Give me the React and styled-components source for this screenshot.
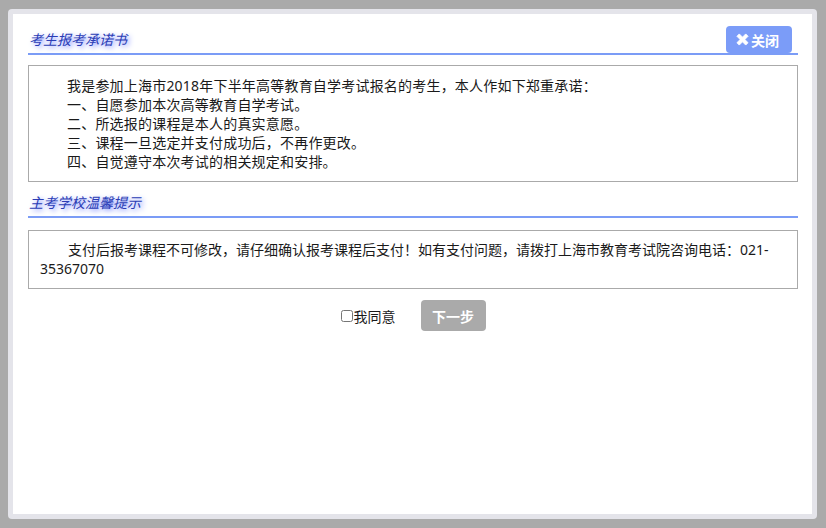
import styled, { createGlobalStyle } from "styled-components";

const Global = createGlobalStyle`
	html, body {
		margin: 0;
		padding: 0;
	}
	body {
		font-family: "Noto Sans", "Noto Sans CJK SC", sans-serif;
	}
`;

const promises = [
	"我是参加上海市2018年下半年高等教育自学考试报名的考生，本人作如下郑重承诺：",
	"一、自愿参加本次高等教育自学考试。",
	"二、所选报的课程是本人的真实意愿。",
	"三、课程一旦选定并支付成功后，不再作更改。",
	"四、自觉遵守本次考试的相关规定和安排。",
];

const App = () => {
	return (
		<Page>
			<Global />
			<Frame>
				<Dialog>
					<SectionHead>
						<SectionTitle>考生报考承诺书</SectionTitle>
						<CloseButton type="button">
							<svg width="15" height="15" viewBox="0 0 14 14">
								<path
									d="M1.8 4 L4 1.8 L7 4.8 L10 1.8 L12.2 4 L9.2 7 L12.2 10 L10 12.2 L7 9.2 L4 12.2 L1.8 10 L4.8 7 Z"
									fill="#fff"
									stroke="#fff"
									strokeWidth="0.8"
									strokeLinejoin="round"
								/>
							</svg>
							关闭
						</CloseButton>
					</SectionHead>
					<Box $top={10}>
						{promises.map((line) => (
							<Line key={line}>{line}</Line>
						))}
					</Box>
					<SectionHead $gap={7}>
						<SectionTitle>主考学校温馨提示</SectionTitle>
					</SectionHead>
					<Box $top={12} $pad="9px 11px 10px">
						<Notice>
							支付后报考课程不可修改，请仔细确认报考课程后支付！如有支付问题，请拨打上海市教育考试院咨询电话：021-
							<br />
							35367070
						</Notice>
					</Box>
					<Actions>
						<Agree>
							<input type="checkbox" />
							我同意
						</Agree>
						<NextButton type="button">下一步</NextButton>
					</Actions>
				</Dialog>
			</Frame>
		</Page>
	);
};

export default App;

const Page = styled.div`
	width: 826px;
	height: 528px;
	box-sizing: border-box;
	background: #aaaaaa;
	padding: 9px 9px 9px 8px;
	display: flex;
	overflow: hidden;
`;

const Frame = styled.div`
	flex: 1;
	background: #e4e4ea;
	border-radius: 4px;
	padding: 5px;
	display: flex;
`;

const Dialog = styled.div`
	flex: 1;
	background: #ffffff;
	padding: 12px 14px 0 15px;
	display: flex;
	flex-direction: column;
`;

const SectionHead = styled.div`
	display: flex;
	align-items: center;
	justify-content: space-between;
	height: 27px;
	margin-top: ${(p) => (p.$gap ? `${p.$gap}px` : "0")};
	border-bottom: 2px solid #7b9cf6;
`;

const SectionTitle = styled.h3`
	margin: 0 0 0 1px;
	font-size: 14px;
	font-weight: normal;
	font-style: italic;
	color: #2b3db5;
	text-shadow: 2px 2px 5px #7d8cff;
	line-height: 19px;
`;

const CloseButton = styled.button`
	display: flex;
	align-items: center;
	gap: 1px;
	width: 66px;
	height: 27px;
	margin-right: 6px;
	padding: 0 0 0 9px;
	border: none;
	border-radius: 4px;
	background: #7b9cf8;
	color: #ffffff;
	font-family: "Noto Sans CJK SC", sans-serif;
	font-size: 14px;
	font-weight: bold;
	cursor: pointer;
`;

const Box = styled.div`
	margin-top: ${(p) => p.$top}px;
	border: 1px solid #aaaaaa;
	padding: ${(p) => p.$pad || "10px 10px 10px 38px"};
	color: #1a1a1a;
	font-size: 14px;
	line-height: 19px;
`;

const Line = styled.div`
	white-space: nowrap;
	letter-spacing: 0.2px;
`;

const Notice = styled.p`
	margin: 0;
	text-indent: 28px;
`;

const Actions = styled.div`
	display: flex;
	justify-content: center;
	align-items: center;
	gap: 25px;
	margin-top: 11px;
`;

const Agree = styled.label`
	display: flex;
	align-items: center;
	font-size: 14px;
	color: #1a1a1a;

	input {
		width: 12px;
		height: 12px;
		margin: 0 1px 0 0;
		accent-color: #888888;
	}
`;

const NextButton = styled.button`
	width: 65px;
	height: 31px;
	border: none;
	border-radius: 4px;
	background: #aaaaaa;
	color: #ffffff;
	font-family: "Noto Sans CJK SC", sans-serif;
	font-size: 14px;
	font-weight: bold;
	cursor: pointer;
`;
